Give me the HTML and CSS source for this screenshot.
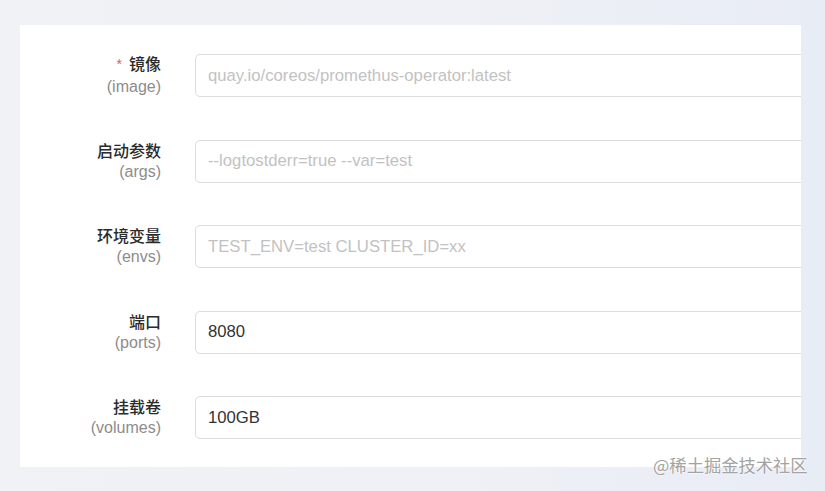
FILE: index.html
```html
<!DOCTYPE html>
<html lang="zh-CN">
<head>
<meta charset="utf-8">
<title>表单</title>
<link rel="stylesheet" href="styles.css">
</head>
<body>
<div class="page">
  <div class="card">
    <form class="form">
      <div class="row">
        <label class="label">
          <span class="zh"><span class="req">*</span>镜像</span>
          <span class="en">(image)</span>
        </label>
        <input class="input" type="text" placeholder="quay.io/coreos/promethus-operator:latest">
      </div>
      <div class="row">
        <label class="label">
          <span class="zh">启动参数</span>
          <span class="en">(args)</span>
        </label>
        <input class="input" type="text" placeholder="--logtostderr=true --var=test">
      </div>
      <div class="row">
        <label class="label">
          <span class="zh">环境变量</span>
          <span class="en">(envs)</span>
        </label>
        <input class="input" type="text" placeholder="TEST_ENV=test CLUSTER_ID=xx">
      </div>
      <div class="row">
        <label class="label">
          <span class="zh">端口</span>
          <span class="en">(ports)</span>
        </label>
        <input class="input" type="text" value="8080">
      </div>
      <div class="row">
        <label class="label">
          <span class="zh">挂载卷</span>
          <span class="en">(volumes)</span>
        </label>
        <input class="input" type="text" value="100GB">
      </div>
    </form>
  </div>
  <div class="watermark">@稀土掘金技术社区</div>
</div>
</body>
</html>
```
FILE: styles.css
```css
* { box-sizing: border-box; }
html, body {
  margin: 0;
  padding: 0;
  width: 825px;
  height: 491px;
  overflow: hidden;
}
body {
  background: linear-gradient(90deg, #f1f2f6 0%, #eef0f5 60%, #e8ecf5 100%);
  font-family: "Liberation Sans", "Noto Sans CJK SC", sans-serif;
}
.page {
  position: relative;
  width: 825px;
  height: 491px;
  padding: 25px 24px 24px 20px;
}
.card {
  width: 781px;
  height: 442px;
  background: #ffffff;
  overflow: hidden;
  padding-top: 29px;
}
.form {
  display: flex;
  flex-direction: column;
  gap: 42.5px;
}
.row {
  display: flex;
  align-items: center;
  gap: 34px;
  height: 43px;
}
.label {
  width: 141px;
  flex: none;
  display: flex;
  flex-direction: column;
  align-items: flex-end;
  line-height: 22px;
  margin-top: -1px;
}
.zh {
  font-family: "Noto Sans CJK SC", sans-serif;
  font-size: 16px;
  font-weight: 500;
  color: #2b2b2b;
}
.req {
  color: #f0506e;
  font-family: "Liberation Sans", sans-serif;
  font-size: 14px;
  font-weight: 400;
  margin-right: 7px;
  position: relative;
  top: -1px;
}
.en {
  font-size: 16px;
  color: #8c8c8c;
}
.input {
  flex: none;
  width: 640px;
  height: 43px;
  border: 1px solid #dcdcdc;
  border-radius: 5px;
  padding: 0 12px;
  font-family: "Liberation Sans", sans-serif;
  font-size: 16.7px;
  color: #333333;
  background: #ffffff;
  outline: none;
}
.input::placeholder {
  color: #c2c2c2;
}
.watermark {
  position: absolute;
  left: 653px;
  top: 454px;
  font-family: "Noto Sans CJK SC", sans-serif;
  font-size: 17.3px;
  line-height: 22px;
  color: #a3a3a3;
  letter-spacing: 0;
  text-shadow: 0 0 2px #ffffff, 0 0 2px #ffffff;
  white-space: nowrap;
}
```
